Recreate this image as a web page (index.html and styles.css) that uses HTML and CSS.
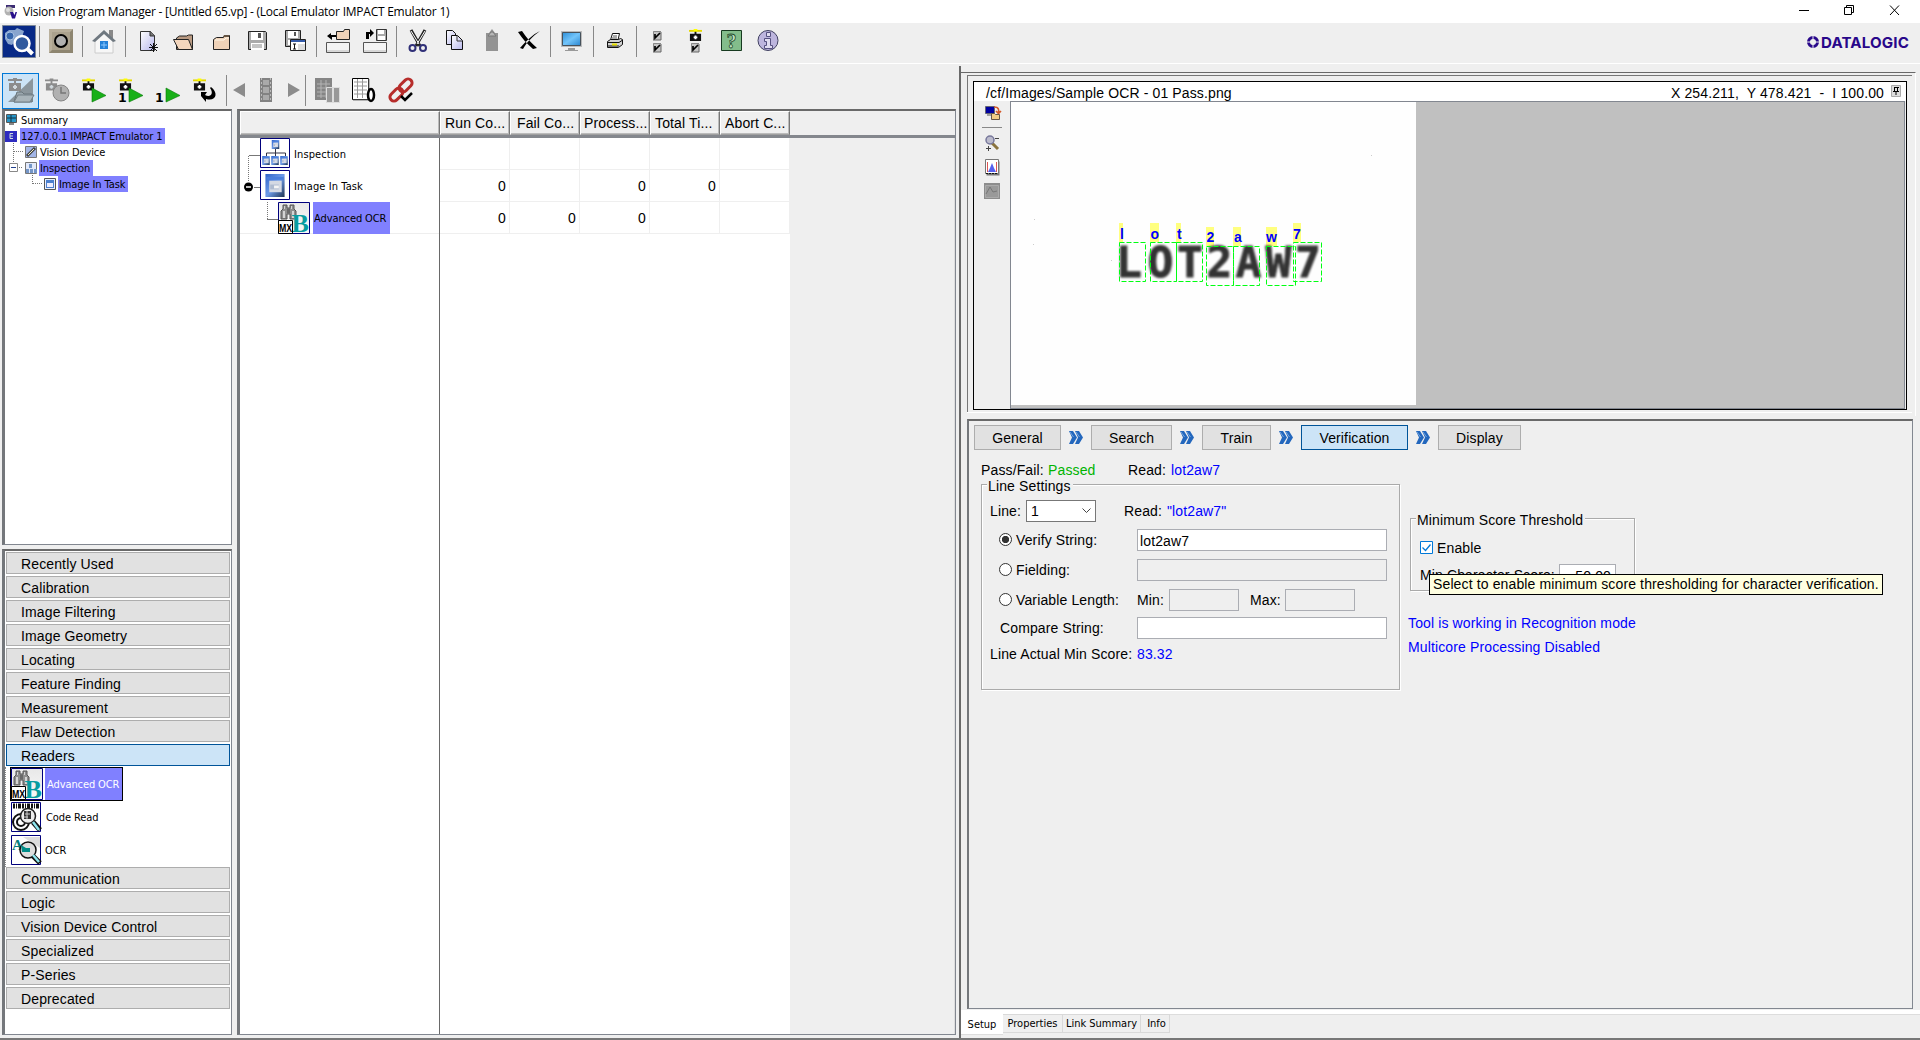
FILE: index.html
```html
<!DOCTYPE html>
<html lang="en">
<head>
<meta charset="utf-8">
<title>Vision Program Manager</title>
<link rel="stylesheet" href="styles.css">
</head>
<body>
<svg class="defs" width="0" height="0">
  <defs>
    <linearGradient id="paper" x1="0" y1="0" x2="1" y2="1"><stop offset="0" stop-color="#fff"/><stop offset="1" stop-color="#b8b8ec"/></linearGradient>
    <linearGradient id="blue" x1="0" y1="0" x2="1" y2="1"><stop offset="0" stop-color="#2f62c8"/><stop offset=".5" stop-color="#6d9be8"/><stop offset="1" stop-color="#1f3350"/></linearGradient>
    <linearGradient id="screen" x1="0" y1="0" x2="1" y2="1"><stop offset="0" stop-color="#2e8fd8"/><stop offset=".5" stop-color="#72c4fa"/><stop offset="1" stop-color="#2a86d0"/></linearGradient>
    <linearGradient id="silver" x1="0" y1="0" x2="0" y2="1"><stop offset="0" stop-color="#e8e8e8"/><stop offset="1" stop-color="#f8f8f8"/></linearGradient>
  </defs>
  <symbol id="camera" viewBox="0 0 14 14"><path d="M0 1h14v2H0z" fill="#e6d800"/><path d="M5 0h4v3H5z" fill="#ff0"/><path d="M6 3h2v2H6zM1 5h12v8H1z" fill="#111"/><path d="M5 9h4M7 7v4" stroke="#fff" stroke-width="2"/></symbol>
  <symbol id="camgray" viewBox="0 0 14 14"><path d="M0 1h14v2H0zM5 0h4v3H5zM6 3h2v2H6zM1 5h12v8H1z" fill="#8c8c8c"/><path d="M5 9h4M7 7v4" stroke="#d0d8dd" stroke-width="2"/></symbol>
  <symbol id="tick" viewBox="0 0 9 10"><path d="M0 0h8v9H0z" fill="#c4c4c4"/><path d="M.5 9V.5H8" stroke="#888" fill="none"/><path d="M0 9h8V1" stroke="#666" fill="none"/><path d="M2 3v4l5-5" stroke="#000" stroke-width="1.7" fill="none"/></symbol>
  <symbol id="window" viewBox="0 0 20 24"><path d="M0 0h20v24H0z" fill="url(#blue)"/><path d="M1 3h18v3H1z" fill="#4a7edc"/><path d="M4 7h13v12H4z" fill="#d4d9e3"/><path d="M5 11h9v5H5z" fill="#aebbd0"/><path d="M9 12h5v3H9z" fill="#f5f5f5"/></symbol>
  <symbol id="ocrmx" viewBox="0 0 32 32"><path d="M.5.5h31v31H.5z" fill="url(#silver)" stroke="#00007c"/><path d="M5 3h4v3h3V3h4v4l2 2v8h-6v-5h-3v5H3V9l2-2z" fill="#8e8e8e" stroke="#555"/><path d="M5 9h2v7H5zM14 9h2v7h-2zM6 4h1v3H6zM13 4h1v3h-1z" fill="#d4d4d4"/><path d="M9 8h3M9 10h3" stroke="#444"/><text x="13.500" y="30" class="serifb" font-size="26" fill="#079ca0">B</text><path d="M.5 18.500h14v13H.5z" fill="#fff" stroke="#000"/><text x="1" y="30" class="mx" font-size="10" textLength="13" lengthAdjust="spacingAndGlyphs">MX</text></symbol>
  <symbol id="next" viewBox="0 0 14 13"><path d="M0 0h4l4 6.500-4 6.500H0l3-6.500zM6 0h4l4 6.500-4 6.500H6l3-6.500z" fill="#2367bd"/><path d="M1 1l3.500 5M7 1l3.500 5" stroke="#73a5df"/></symbol>
</svg>
<div class="app">
  <header class="titlebar">
    <svg width="20" height="22" viewBox="0 0 20 22"><path d="M3 5h9v3H3z" fill="#3b2b73"/><circle cx="6" cy="11" r="4.500" fill="#b2b2b2"/><circle cx="5" cy="10" r="2" fill="#ddd"/><path d="M7 12h3l1.500 3 1-3H14l-2 6.500h-3z" fill="#28108a"/></svg>
    <span class="title">Vision Program Manager - [Untitled 65.vp] - (Local Emulator IMPACT Emulator 1)</span>
    <svg class="winctl" width="102" height="22" viewBox="0 0 102 22" fill="none" stroke="#000"><path d="M0 10.500h10M45.500 7.500h7v7h-7zM47.500 7V5.500h7v7H53M91 5.500l9 9.500M100 5.500l-9 9.500"/></svg>
  </header>

  <nav class="toolbar main">
    <svg width="37" height="36"><path d="M3.500 1.500h33v32h-33z" fill="#082a87" stroke="#7c8898"/><path d="M6 9l4-3h6l2-2 7 3-2 6-4 6-4-1-2 3-4-1-3-5z" fill="#89a5ce"/><circle cx="11" cy="12" r="4" fill="#3867ad" stroke="#a9c1e2"/><circle cx="23" cy="19.500" r="7.500" fill="#315a9e" stroke="#fff" stroke-width="2.500"/><path d="M28.500 25l5 5" stroke="#fff" stroke-width="4"/></svg>
    <i class="sep"></i>
    <svg width="37" height="36"><path d="M7 5h24v24H7z" fill="#8d8570"/><path d="M10 8h18v18H10z" fill="#aba28e"/><path d="M7 29V5h24l-3 3H10v18z" fill="#b9b09c"/><circle cx="19" cy="17" r="6" fill="#b0b0b0" stroke="#000" stroke-width="2"/></svg>
    <i class="sep"></i>
    <svg width="37" height="36"><path d="M24 6h4v8h-4z" fill="#888"/><path d="M10 17l9-9 9 9v12H10z" fill="#f7f7f7" stroke="#ccc"/><path d="M7 17L19 6l12 11-3 1-9-8-9 8z" fill="#6f7880"/><path d="M15 17h8v8h-8z" fill="#2581d8"/><path d="M16 21h6M19 18v6" stroke="#8cc8ff"/></svg>
    <i class="sep"></i>
    <svg width="37" height="36"><path d="M12.500 7.500h10l4 4v15h-14z" fill="url(#paper)" stroke="#333"/><path d="M22 7v5h5" fill="#777" stroke="#333"/><path d="M25.500 19v9M21 23.500h9M22 20l7 7M29 20l-7 7" stroke="#111"/></svg>
    <svg width="37" height="36"><path d="M11.500 25.500V14l3-2h7l2-1h4v14.500z" fill="#b99a82" stroke="#222"/><path d="M8.500 15.500h15l4 10h-14z" fill="#f3d6bd" stroke="#222"/></svg>
    <svg width="37" height="36"><path d="M11.500 25.500v-10l3-2h7l1-2h5v14z" fill="#efd2b8" stroke="#222"/><path d="M13 16h9l2-2h3" fill="none" stroke="#fff8e8"/><path d="M22 11h5v2h-6z" fill="#654"/></svg>
    <svg width="37" height="36"><path d="M9.500 7.500h17l1 1v17h-18z" fill="#aaa" stroke="#222"/><path d="M12 8h12v8H12zM12 19h13v7H12z" fill="#fff"/><path d="M19 9h3v5h-3z" fill="#555"/><path d="M13 21h10M13 23h10" stroke="#888"/></svg>
    <svg width="37" height="36"><path d="M9.500 6.500h15v16h-15z" fill="#aaa" stroke="#222"/><path d="M12 7h10v7H12zM12 16h8v5h-8z" fill="#fff"/><path d="M18 8h2v4h-2z" fill="#555"/><path d="M14.500 15.500h15v11h-15z" fill="#fff" stroke="#222"/><path d="M15 16h14v2H15z" fill="#345ba9"/><path d="M22 20h7v6h-7z" fill="#ddd"/><path d="M17 20h3M18.500 20v5M17 25h3" stroke="#111"/></svg>
    <i class="sep"></i>
    <svg width="37" height="36"><path d="M17.500 15.500V7.500h7l1-2h5v10z" fill="#efd2b8" stroke="#222"/><path d="M8 12l4-3v2h5v2h-4v3z" fill="#000"/><path d="M7.500 18.500h23v10h-23z" fill="#f4f4f4" stroke="#555"/><path d="M8 27h22" stroke="#bbb"/></svg>
    <svg width="37" height="36"><path d="M20.500 5.500h10v11h-10z" fill="#aaa" stroke="#333"/><path d="M22 6h6v4h-6zM22 12h7v4h-7z" fill="#fff"/><path d="M10 15V8h4V5l4 4-4 4v-3h-1v5z" fill="#000"/><path d="M7.500 18.500h23v10h-23z" fill="#f4f4f4" stroke="#555"/><path d="M8 27h22" stroke="#bbb"/></svg>
    <i class="sep"></i>
    <svg width="37" height="36" fill="none"><path d="M12 6l9 16M26 6l-9 16" stroke="#222" stroke-width="3"/><path d="M12 7l8 13M26 7l-8 13" stroke="#fff"/><circle cx="13.500" cy="24" r="3" stroke="#303078" stroke-width="2"/><circle cx="24" cy="24" r="3" stroke="#303078" stroke-width="2"/></svg>
    <svg width="37" height="36"><path d="M10.500 6.500h6l3 3v11h-9z" fill="url(#paper)" stroke="#111"/><path d="M15.500 11.500h6l5 5v9h-11z" fill="url(#paper)" stroke="#111"/><path d="M21 12v5h5" fill="none" stroke="#333"/></svg>
    <svg width="37" height="36"><path d="M13 9h3l3-4 3 4h3v18H13z" fill="#939393"/><path d="M15 12h8l-3-4h-2z" fill="#b7b7b7" stroke="#777"/></svg>
    <svg width="37" height="36"><path d="M8 8l4-1c4 6 9 12 15 17l-4 1C17 20 12 14 8 8zM30 7c-8 4-14 10-20 17l3 1c4-7 9-12 17-18z" fill="#000"/></svg>
    <i class="sep"></i>
    <svg width="37" height="36"><path d="M8 7h21v16H8z" fill="#bbb"/><path d="M9.500 8.500h18v13h-18z" fill="url(#screen)" stroke="#46515b"/><path d="M15 24h7v2h3v1H12v-1h3z" fill="#999"/></svg>
    <i class="sep"></i>
    <svg width="37" height="36"><path d="M14.500 16l2-6.500h7L22 16z" fill="#fff" stroke="#111"/><path d="M17 12h4M16 14h5" stroke="#555"/><path d="M11.500 17.500l3-2h8l2-1 2 1v5l-4 3h-11z" fill="#d1d1d1" stroke="#111"/><path d="M12 18.500h11l3-2M12 22h11" fill="none" stroke="#111"/><path d="M16 20.500h5" stroke="#e8e000" stroke-width="2"/></svg>
    <i class="sep"></i>
    <svg width="37" height="36"><use href="#tick" x="14" y="7" width="9" height="10"/><use href="#tick" x="14" y="19" width="9" height="10"/></svg>
    <svg width="37" height="36"><use href="#camera" x="13" y="5" width="13" height="13"/><use href="#tick" x="15" y="19" width="9" height="10"/></svg>
    <svg width="37" height="36"><path d="M8.500 6.500h20v20h-20z" fill="#83bd8b" stroke="#173a20"/><text x="18.500" y="24" text-anchor="middle" class="help" font-size="20">?</text></svg>
    <svg width="37" height="36"><circle cx="18" cy="16.500" r="10" fill="#bdb5de" stroke="#404060"/><path d="M16.500 8.500h4v4h-4zM14.500 14.500h6v7h2v3h-8v-3h2v-4h-2z" fill="#e0dcf0" stroke="#555080"/></svg>
    <svg class="brand" width="104" height="16" viewBox="0 0 104 16"><circle cx="6" cy="7" r="4.500" fill="none" stroke="#28078a" stroke-width="3"/><path d="M6 1v4M6 9v4M0 7h4M8 7h4" stroke="#efefef"/><text x="14" y="13" textLength="88" lengthAdjust="spacingAndGlyphs">DATALOGIC</text></svg>
  </nav>

  <div class="work">
    <section class="left">
      <nav class="toolbar run">
        <svg class="on" width="37" height="36"><path d="M31 5v24H6z" fill="#8b969d"/><use href="#camgray" x="6" y="5" width="14" height="14"/><path d="M12 29l3-10h5l2 2h8v8z" fill="#9ba7ae" stroke="#68747a"/><path d="M16 22h16l-4 7H12z" fill="#a9b4ba" stroke="#737f86"/></svg>
        <svg width="37" height="36"><use href="#camgray" x="6" y="5" width="13" height="14"/><circle cx="22" cy="20" r="8" fill="#b1b1b1" stroke="#858585"/><path d="M22 14v6h5" stroke="#777" fill="none" stroke-width="1.500"/></svg>
        <svg width="37" height="36"><use href="#camera" x="6" y="5" width="13" height="14"/><path d="M16 15l14 7.500L16 29z" fill="#18b018" stroke="#087808" stroke-width=".6"/></svg>
        <svg width="37" height="36"><use href="#camera" x="6" y="5" width="13" height="14"/><text x="5" y="29" class="one">1</text><path d="M16 15l14 7.500L16 29z" fill="#18b018" stroke="#087808" stroke-width=".6"/></svg>
        <svg width="37" height="36"><text x="5" y="29" class="one">1</text><path d="M16 15l14 7.500L16 29z" fill="#18b018" stroke="#087808" stroke-width=".6"/></svg>
        <svg width="37" height="36"><use href="#camera" x="6" y="5" width="13" height="14"/><path d="M24 14c8 6 5 15-5 12v3l-5-6V19h6l-2 3c6 3 9-2 5-7z" fill="#000"/></svg>
        <i class="sep"></i>
        <svg width="73" height="36"><path d="M15 10v14L3 17zM58 10v14l12-7z" fill="#8c8c8c"/><path d="M30 5h12v24H30z" fill="#828282"/><path d="M33 7h6v5h-6zM33 14h6v6h-6zM33 22h6v5h-6z" fill="#aaa"/><path d="M31.500 5v24M40.500 5v24" stroke="#bbb" stroke-dasharray="2 2"/></svg>
        <i class="sep"></i>
        <svg width="37" height="36"><path d="M6 5h17v22H6z" fill="#858585"/><path d="M8 11h13M8 15h13M8 19h13M8 23h13M12 7v18M17 7v18" stroke="#b4b4b4"/><path d="M17.500 14.500h6v15h-6zM24.500 14.500h6v15h-6z" fill="#999" stroke="#ddd"/></svg>
        <svg width="37" height="36"><path d="M6.500 5.500h16v21h-16z" fill="#fff" stroke="#000"/><path d="M8 9h13M8 13h13M8 17h13M8 21h13M11.500 6v19M16.500 6v19" stroke="#999"/><path d="M7 27h16V6" fill="none" stroke="#777"/><ellipse cx="25" cy="22" rx="3" ry="6" fill="#fff" stroke="#000" stroke-width="2.500"/></svg>
        <svg width="37" height="36"><g transform="rotate(-45 18 17)" fill="none" stroke="#b72d2b" stroke-width="3"><rect x="4" y="13" width="15" height="8" rx="4"/><rect x="17" y="13" width="15" height="8" rx="4"/></g><path d="M18 23l4 4 7-7" fill="none" stroke="#000" stroke-width="2.500"/></svg>
      </nav>
      <div class="panes">
        <div class="side">
          <div class="tree small">
            <svg class="trunk" width="60" height="82" fill="none" stroke="#777" stroke-dasharray="1 1"><path d="M8.500 32v24M9 40.500h9M14 56.500h4M27.500 64v9M28 72.500h10"/></svg>
            <div class="tr"><svg width="16" height="16"><path d="M1 3h10v7H1z" fill="#2795c7"/><path d="M1 6h10M6 3v7" stroke="#134"/><path d="M1.500 2.500h10v8h-10z" fill="none" stroke="#555"/><path d="M4 12h5" stroke="#888" stroke-width="2"/></svg><span>Summary</span></div>
            <div class="tr"><svg width="16" height="16"><path d="M0 3h12v11H0z" fill="#2e2cc0"/><path d="M8 5.500H5v5h3M5 8h3" fill="none" stroke="#cdd"/></svg><span class="hl">127.0.0.1 IMPACT Emulator 1</span></div>
            <div class="tr lv1"><svg width="16" height="16"><path d="M1.500 2.500h11v11h-11z" fill="#a3b6e7" stroke="#777"/><path d="M3 12l8-8" stroke="#444" stroke-width="3"/><path d="M4 11l6-6" stroke="#eec"/></svg><span>Vision Device</span></div>
            <div class="tr lv1"><svg width="16" height="16"><path d="M1.500 2.500h11v11h-11z" fill="#e2e9fa" stroke="#777"/><path d="M5 4h3v4H5zM2 9h3v4H2zM6 9h3v4H6zM10 9h3v4h-3z" fill="#7496c8"/></svg><span class="hl">Inspection</span></div>
            <div class="tr lv2"><svg width="16" height="16"><path d="M1.500 2.500h11v11h-11z" fill="#e9f0ff" stroke="#555"/><path d="M3 4h8v8H3z" fill="#4c80ce"/><path d="M4 7h6v4H4z" fill="#eef"/></svg><span class="hl">Image In Task</span></div>
            <svg class="toggle" width="9" height="9"><path d="M.5.5h8v8h-8z" fill="#fff" stroke="#888"/><path d="M2 4.500h5" stroke="#22408c"/></svg>
          </div>
          <div class="drawer">
            <div class="cat">Recently Used</div><div class="cat">Calibration</div><div class="cat">Image Filtering</div><div class="cat">Image Geometry</div><div class="cat">Locating</div><div class="cat">Feature Finding</div><div class="cat">Measurement</div><div class="cat">Flaw Detection</div><div class="cat on">Readers</div>
            <div class="readers small">
              <div class="rd sel"><svg width="32" height="32"><use href="#ocrmx" width="32" height="32"/></svg><span>Advanced OCR</span></div>
              <div class="rd"><svg width="31" height="31"><path d="M.5.500h29v29H.500z" fill="#fff" stroke="#00007c"/><path d="M2 4h26" stroke="#111" stroke-width="5" stroke-dasharray="2 1 1 1 3 1"/><circle cx="10" cy="20" r="8" fill="none" stroke="#111" stroke-width="2"/><circle cx="10" cy="20" r="4" fill="none" stroke="#111" stroke-width="2"/><circle cx="17" cy="14" r="7.500" fill="#eee" stroke="#222" stroke-width="1.500"/><path d="M13 9h7v8h-7z" fill="#333"/><path d="M14 12h5M16 9v8M13 15h4" stroke="#ccc"/><path d="M22 20l7 8" stroke="#111" stroke-width="5"/><path d="M22 20l6 8" stroke="#8ee6ee" stroke-width="2.500"/></svg><span>Code Read</span></div>
              <div class="rd third"><svg width="31" height="31"><path d="M.5.500h29v29H.500z" fill="#fff" stroke="#00007c"/><path d="M12 2h17v11z" fill="#ddd"/><text x="1" y="15" class="serifb" font-size="15" fill="#08807e">A</text><circle cx="17" cy="15" r="8" fill="#ddd" stroke="#111" stroke-width="1.500"/><path d="M10 10l5 3h4v4h-8z" fill="#008c88"/><path d="M22 21l7 7" stroke="#111" stroke-width="5"/><path d="M22 20l6 7" stroke="#8ee6ee" stroke-width="2.500"/></svg><span>OCR</span></div>
            </div>
            <div class="cat">Communication</div><div class="cat">Logic</div><div class="cat">Vision Device Control</div><div class="cat">Specialized</div><div class="cat">P-Series</div><div class="cat">Deprecated</div>
          </div>
        </div>
        <div class="table">
          <div class="thead"><b class="c0"></b><b>Run Co...</b><b class="ind">Fail Co...</b><b class="tight">Process...</b><b>Total Ti...</b><b>Abort C...</b></div>
          <div class="tbody">
            <div class="names small">
              <svg class="trunk" width="60" height="96" fill="none" stroke="#777"><path d="M9 17.500h11M14 49.500h6M27 81.500h11"/><path d="M8.500 18v26M27.500 64v17" stroke-dasharray="1 1"/><circle cx="8.500" cy="49" r="4.500" fill="#000" stroke="none"/><path d="M6 49h5" stroke="#fff" stroke-width="1.500"/></svg>
              <div class="nm"><svg width="31" height="31"><path d="M.5.500h29v29H.500z" fill="#fff" stroke="#00007c"/><path d="M15.500 10v8M6.500 18v-3h19v3" stroke="#334" fill="none"/><use href="#window" x="11" y="2" width="9" height="9"/><use href="#window" x="2" y="18" width="8" height="9"/><use href="#window" x="11" y="18" width="8" height="9"/><use href="#window" x="20" y="18" width="8" height="9"/></svg><span>Inspection</span></div>
              <div class="nm"><svg width="31" height="31"><path d="M.5.500h29v29H.500z" fill="#fff" stroke="#00007c"/><use href="#window" x="5" y="4" width="20" height="23"/></svg><span>Image In Task</span></div>
              <div class="nm deep"><svg width="32" height="32"><use href="#ocrmx" width="32" height="32"/></svg><span class="hl">Advanced OCR</span></div>
            </div>
            <div class="cells">
              <i></i><i></i><i></i><i></i><i></i>
              <i>0</i><i></i><i>0</i><i>0</i><i></i>
              <i>0</i><i>0</i><i>0</i><i></i><i></i>
            </div>
          </div>
        </div>
      </div>
    </section>

    <section class="right">
      <div class="frame">
        <div class="viewer">
          <div class="vtitle"><span>/cf/Images/Sample OCR - 01 Pass.png</span><span class="coords">X 254.211,&nbsp; Y 478.421&nbsp; -&nbsp; I 100.00</span><svg width="11" height="12"><path d="M.5.500h9v11h-9z" fill="#ddd" stroke="#aaa"/><path d="M3 2.500h5M3.500 2v4.500M6.500 2v4.500M2 6.500h6M5 7v3" stroke="#000"/></svg></div>
          <div class="vbody">
            <div class="vtools">
              <svg width="36" height="100">
                <path d="M11.500 5.500h9v7h-9z" fill="#0000a0" stroke="#667"/><path d="M13 14h5" stroke="#555"/><path d="M20 6c5 0 5 3 4.500 6M22 10l2.500 2.500L27 10" fill="none" stroke="#d45a2a" stroke-width="1.600"/><path d="M17.500 12.500h3l1 1h4v5h-8z" fill="#f3cd86" stroke="#654"/><path d="M8 26.500h20" stroke="#888"/>
                <path d="M18 42l6 6" stroke="#8a733e" stroke-width="3"/><circle cx="16" cy="39" r="4" fill="#bbc" stroke="#77779b" stroke-width="1.500"/><path d="M21 37.500h4M12 47.500h5M14.500 45v5" stroke="#444"/>
                <path d="M12.500 60.500h13v14h-13z" fill="#777"/><path d="M11.500 58.500h13v14h-13z" fill="#fff" stroke="#777"/><path d="M13.500 61v10M22.500 61v10" stroke="#d55"/><path d="M14 71l2-4 2-5 2 5 2 4z" fill="#5660ef"/><path d="M12 72.500h12" stroke="#111" stroke-dasharray="2 1"/>
                <path d="M10 82h16v16H10z" fill="#8c8c8c"/><path d="M11.500 84.500h13v12h-13z" fill="#999" stroke="#aaa"/><path d="M12 93l4-7 3 5 4-1" fill="none" stroke="#777"/>
              </svg>
            </div>
            <svg class="image" width="894" height="306">
              <path d="M0 0h405v303H0z" fill="#fefefe"/>
              <path class="label-bg" d="M108 121h4v19h-4zM139 121h9v19h-9zM165 121h5v19h-5zM195 125h8v19h-8zM222 125h8v19h-8zM255 125h11v19h-11zM282 121h8v19h-8z"/>
              <g class="ocr">
                <text y="174.500"><tspan x="105">L</tspan><tspan x="136.500">O</tspan><tspan x="166">T</tspan><tspan x="195.500">2</tspan><tspan x="224.500">A</tspan><tspan x="254.500">W</tspan><tspan x="284">7</tspan></text>
              </g>
              <g fill="none" stroke="#00ff12" stroke-dasharray="5 2"><path d="M108.500 140.500h26v39h-26zM139.500 140.500h26v39h-26zM165.500 140.500h26v39h-26zM195.500 144.500h27v39h-27zM222.500 144.500h26v39h-26zM255.500 144.500h29v39h-29zM282.500 140.500h28v39h-28z"/></g>
              <g class="marks"><text x="109" y="137">l</text><text x="139.500" y="137">o</text><text x="166" y="137">t</text><text x="195.500" y="140">2</text><text x="223" y="140">a</text><text x="255" y="140">w</text><text x="282" y="137">7</text></g>
              <path d="M360 53h1v1h-1zM23 117h1v1h-1zM22 142h1v1h-1zM100 158h1v1h-1z" fill="#ccc"/>
            </svg>
          </div>
        </div>
      </div>
      <div class="setup">
        <div class="steps">
          <span style="width:87px">General</span><svg width="14" height="13"><use href="#next" width="14" height="13"/></svg>
          <span style="width:81px">Search</span><svg width="14" height="13"><use href="#next" width="14" height="13"/></svg>
          <span style="width:69px">Train</span><svg width="14" height="13"><use href="#next" width="14" height="13"/></svg>
          <span class="on" style="width:107px">Verification</span><svg width="14" height="13"><use href="#next" width="14" height="13"/></svg>
          <span style="width:83px">Display</span>
        </div>
        <div class="result"><span class="k1">Pass/Fail:</span><span class="pass">Passed</span><span class="k2">Read:</span><span class="val">lot2aw7</span></div>
        <div class="cols">
          <div class="group line">
            <div class="legend">Line Settings</div>
            <div class="f l1"><span class="w36">Line:</span><span class="select">1<svg width="9" height="6"><path d="M.5.500l4 4 4-4" fill="none" stroke="#444"/></svg></span><span class="read">Read:</span><span class="val">"lot2aw7"</span></div>
            <div class="f opt"><span class="lab"><i class="radio on"></i>Verify String:</span><span class="box wide white">lot2aw7</span></div>
            <div class="f opt"><span class="lab"><i class="radio"></i>Fielding:</span><span class="box wide"></span></div>
            <div class="f opt"><span class="lab"><i class="radio"></i>Variable Length:</span><span class="w32">Min:</span><span class="box num"></span><span class="max">Max:</span><span class="box num"></span></div>
            <div class="f cmp"><span class="lab2">Compare String:</span><span class="box wide white"></span></div>
            <div class="f score"><span class="lab3">Line Actual Min Score:</span><span class="val">83.32</span></div>
          </div>
          <div class="aside">
            <div class="group min">
              <div class="legend">Minimum Score Threshold</div>
              <div class="f en"><svg width="13" height="13"><path d="M.5.500h12v12H.500z" fill="#fff" stroke="#0078d7"/><path d="M2.500 6.500l3 3 5-6" fill="none" stroke="#0078d7" stroke-width="1.300"/></svg><span>Enable</span></div>
              <div class="f mc"><span class="w139">Min Character Score:</span><span class="box white fifty">50.00</span></div>
              <div class="tip">Select to enable minimum score thresholding for character verification.</div>
            </div>
            <p class="note">Tool is working in Recognition mode</p>
            <p class="note">Multicore Processing Disabled</p>
          </div>
        </div>
      </div>
      <div class="tabs small"><span class="on">Setup</span><span style="width:60px">Properties</span><span style="width:78px">Link Summary</span><span class="info" style="width:29px">Info</span></div>
    </section>
  </div>
</div>
</body>
</html>
```
FILE: styles.css
```css
* { box-sizing: border-box; }
body { margin: 0; background: #efefef; color: #000; font: 14px/16px "Liberation Sans", Arial, sans-serif; letter-spacing: .13px; overflow: hidden; white-space: nowrap; }
svg { display: block; flex: none; }
i, b { font-style: normal; font-weight: normal; }
.defs { position: absolute; }
.small { font: 11px/17px "DejaVu Sans Condensed", "DejaVu Sans", sans-serif; font-stretch: condensed; letter-spacing: -.1px; }
.serifb { font-family: "Liberation Serif", serif; font-weight: bold; letter-spacing: 0; }
.mx { font-family: "Liberation Sans", sans-serif; font-weight: bold; fill: #000; }
.one { font: bold 12.5px "DejaVu Sans", sans-serif; }
.help { font-family: "Liberation Serif", serif; font-weight: bold; fill: #c3e6c7; stroke: #234c2b; stroke-width: .8px; }

.app { height: 1040px; display: flex; flex-direction: column; }
.titlebar { height: 23px; background: #fff; display: flex; padding-left: 3px; flex: none; }
.title { font: 12px/24px "Open Sans", "Noto Sans", sans-serif; letter-spacing: -.24px; }
.winctl { margin: 0 19px 0 auto; }

.toolbar { display: flex; flex: none; }
.toolbar.main { height: 41px; border-bottom: 1px solid #fff; margin-left: -1px; padding-top: 1px; }
.sep { width: 1px; height: 31px; background: #888; margin: 2px 2px 0 3px; }
.brand { margin: 11px 9px 0 auto; }
.brand text { font: bold 15px "Inter", "Liberation Sans", sans-serif; fill: #28078a; }

.work { display: flex; height: 976px; border-bottom: 2px solid #777; }
.left { width: 956px; display: flex; flex-direction: column; }
.toolbar.run { height: 45px; padding: 9px 0 0 2px; }
.toolbar.run .sep { margin: 2px 3px 0 2px; }
.toolbar.run .on { outline: 1px solid #0078d7; outline-offset: -1px; background: #cce4f7; }
.panes { display: flex; height: 926px; }
.side { width: 230px; margin-left: 2px; display: flex; flex-direction: column; gap: 4px; }
.tree { height: 436px; background: #fff; border: 1px solid #828790; border-left: 3px solid #74777b; border-top: 2px solid #696969; padding-top: 1px; position: relative; }
.tr { display: flex; height: 16px; }
.tr span { padding: 0 3px 0 1px; margin-left: -1px; height: 16px; }
.hl { background: #8080ff; }
.lv1 { padding-left: 19px; }
.lv2 { padding-left: 38px; }
.trunk { position: absolute; left: 0; top: 0; }
.toggle { position: absolute; left: 4px; top: 52px; }
.drawer { height: 486px; background: #fff; border: 1px solid #828790; border-left: 3px solid #74777b; border-top: 2px solid #696969; padding: 1px 1px 0 1px; }
.cat { height: 22px; margin-bottom: 2px; border: 1px solid #adadad; background: #e1e1e1; padding-left: 14px; line-height: 22px; }
.cat.on { background: #cce4f7; border-color: #005499; }
.readers { height: 100px; padding-left: 4px; margin: -1px 0 0 -1px; border-left: 1px dotted #888; }
.rd { height: 33px; display: flex; align-items: center; padding-left: 1px; }
.rd span { margin-left: 4px; }
.rd.sel { width: 113px; height: 34px; border: 1px solid #000; background: #8080ff; color: #fff; padding: 0; }
.rd.sel svg { width: 34px; background: #fff; }
.rd.sel span { margin-left: 2px; }
.rd.third span { margin-left: 3px; }

.table { width: 719px; margin-left: 5px; border: 1px solid #828790; border-left: 3px solid #74777b; border-top: 2px solid #696969; display: flex; flex-direction: column; }
.thead { height: 27px; border-bottom: 3px solid #84878d; display: flex; }
.thead b { width: 70px; padding: 2px 0 0 4px; line-height: 19px; border-right: 1px solid #777; border-bottom: 1px solid #a0a0a0; border-left: 1px solid #fff; border-top: 1px solid #fff; box-shadow: inset -1px -1px #bbb; }
.thead .ind { padding-left: 6px; }
.thead .tight { padding-left: 3px; }
.thead .c0 { width: 200px; }
.tbody { flex: 1; display: flex; background: linear-gradient(to right, #fff 550px, #efefef 550px); border-right: 1px solid #ddd; }
.names { width: 200px; border-right: 1px solid #696969; position: relative; }
.nm { height: 32px; display: flex; padding-left: 20px; border-bottom: 1px solid transparent; letter-spacing: .1px; }
.nm span { margin-left: 3px; line-height: 33px; height: 32px; }
.nm.deep { padding-left: 38px; border-color: #eee; letter-spacing: -.1px; }
.nm.deep span { padding: 0 4px 0 1px; }
.cells { display: grid; grid-template-columns: repeat(5, 70px); grid-auto-rows: 32px; align-content: start; }
.cells i { border-right: 1px solid #efefef; border-bottom: 1px solid #efefef; text-align: right; padding-right: 3px; line-height: 33px; }

.right { width: 961px; margin: 2px 0 0 3px; border-left: 2px solid #696969; display: flex; flex-direction: column; }
.frame { height: 344px; margin: 6px 4px 0 0; border-top: 1px solid #696969; border-right: 1px solid #fff; padding: 2px 3px 0 6px; }
.viewer { height: 337px; border-top: 1px solid #777; border-left: 1px solid #777; padding: 5px 5px 2px 5px; box-shadow: 0 1px #fff; }
.vtitle { height: 20px; background: #fff; border: 1px solid #000; border-bottom: 0; display: flex; align-items: flex-start; padding: 3px 4px 0 12px; line-height: 16px; }
.vtitle .coords { margin: 0 7px 0 auto; }
.vbody { height: 309px; border: 1px solid #000; border-top: 0; display: flex; }
.vtools { width: 36px; }
.image { background: #c0c0c0; border: 1px solid #828790; width: 895px; height: 308px; }
.label-bg { fill: #ffff80; }
.ocr text { font: bold 43px "DejaVu Sans Mono", monospace; fill: #333; stroke: #333; stroke-width: .8px; letter-spacing: 0; filter: blur(.8px); }
.marks text { font: bold 14px "Liberation Sans", sans-serif; fill: #00f; }

.setup { height: 590px; margin: 3px 7px 0 6px; border: 1px solid #828790; border-left: 2px solid #74777b; border-top: 2px solid #696969; padding: 4px 0 0 5px; }
.steps { display: flex; align-items: center; gap: 8px; height: 25px; }
.steps span { height: 25px; border: 1px solid #adadad; background: #e1e1e1; text-align: center; line-height: 25px; }
.steps .on { background: #cce4f7; border-color: #005499; }
.result { display: flex; padding-left: 7px; margin-top: 12px; height: 17px; }
.k1 { width: 67px; } .k2 { width: 43px; }
.pass { color: #00b400; width: 80px; }
.val { color: #00f; }
.cols { display: flex; padding-left: 7px; margin-top: 5px; }
.group { border: 1px solid #aaa; box-shadow: 1px 1px #fff, inset 1px 1px #fff; position: relative; flex: none; }
.legend { position: absolute; top: -7px; left: 5px; padding: 0 2px 0 1px; background: #efefef; }
.line { width: 419px; height: 206px; padding: 15px 0 0 8px; }
.f { display: flex; align-items: center; height: 22px; }
.w36 { width: 36px; }
.select { width: 70px; height: 22px; border: 1px solid #777; background: #fff; display: flex; justify-content: space-between; align-items: center; padding: 0 4px; }
.read { margin-left: 28px; width: 43px; }
.opt { margin-top: 8px; padding-left: 9px; }
.l1 + .opt { margin-top: 7px; }
.lab { width: 138px; display: flex; align-items: center; }
.radio { width: 13px; height: 13px; border: 1px solid #333; border-radius: 50%; background: #fff; margin: 0 4px 1px 0; }
.radio.on { background: radial-gradient(#333 3.300px, #fff 4px); }
.box { height: 22px; border: 1px solid #abadb3; padding: 0 2px; line-height: 22px; }
.white { background: #fff; }
.wide { width: 250px; }
.w32 { width: 32px; }
.num { width: 70px; }
.max { width: 35px; margin-left: 11px; }
.cmp { margin-top: 6px; padding-left: 10px; }
.lab2 { width: 137px; }
.score { margin-top: 4px; }
.lab3 { width: 147px; }
.aside { padding: 34px 0 0 10px; }
.min { width: 225px; height: 73px; padding: 20px 0 0 9px; margin-bottom: 24px; }
.en { height: 17px; }
.en span { margin-left: 4px; }
.mc { margin-top: 8px; }
.w139 { width: 139px; }
.fifty { width: 57px; text-align: right; padding-right: 4px; }
.tip { position: absolute; left: 18px; top: 55px; width: 454px; height: 21px; border: 1px solid #000; background: #ffffe1; padding-left: 3px; line-height: 19px; z-index: 2; }
.note { margin: 0 0 8px -2px; color: #00f; }

.tabs { display: flex; margin-top: 1px; height: 25px; letter-spacing: 0; background: linear-gradient(#fff 4px, #ddd 4px, #ddd 5px, transparent 5px); }
.tabs span { height: 19px; margin-top: 4px; border: 1px solid #d9d9d9; border-left: 0; text-align: center; line-height: 17px; background: #efefef; }
.tabs .on { width: 42px; height: 25px; margin: 0; border: 0; border-bottom: 1px solid #ddd; background: #fff; line-height: 30px; }
.tabs .info { padding-left: 3px; }
```
